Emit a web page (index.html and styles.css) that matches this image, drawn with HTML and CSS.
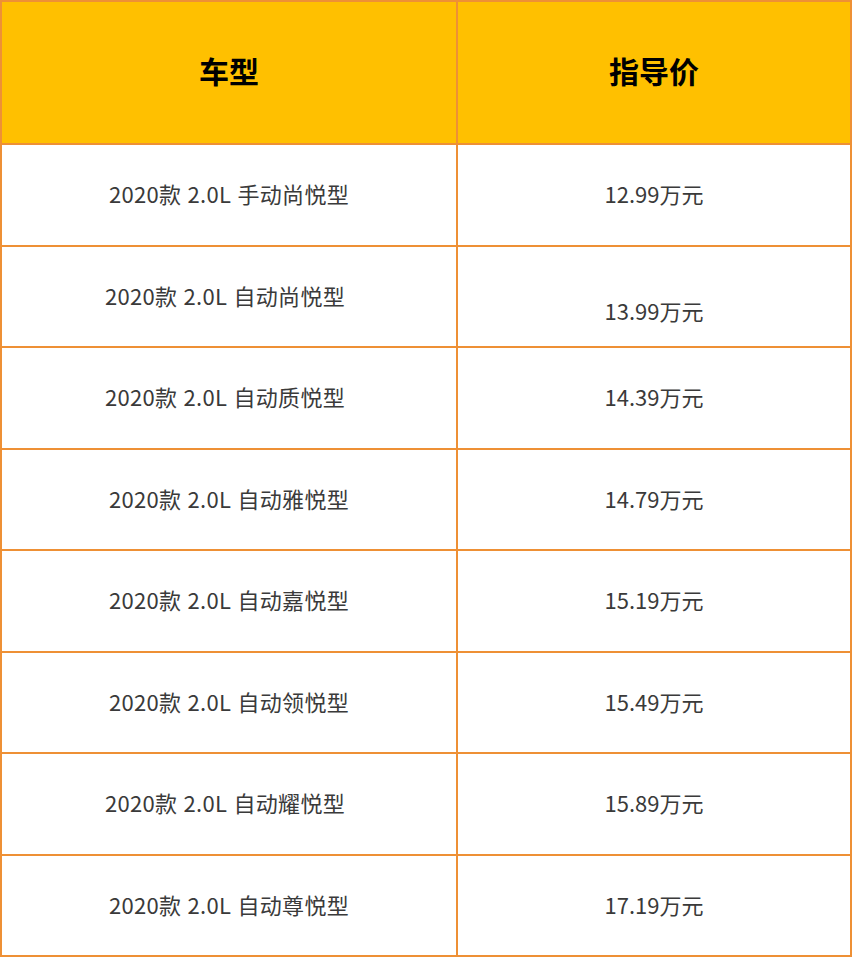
FILE: index.html
```html
<!DOCTYPE html>
<html lang="zh-CN">
<head>
<meta charset="utf-8">
<title>车型指导价</title>
<link rel="stylesheet" href="styles.css">
</head>
<body>
<div class="table">
  <div class="cell head">车型</div>
  <div class="cell head">指导价</div>

  <div class="cell model">2020款 2.0L 手动尚悦型</div>
  <div class="cell price">12.99万元</div>

  <div class="cell model shift">2020款 2.0L 自动尚悦型</div>
  <div class="cell price low">13.99万元</div>

  <div class="cell model shift">2020款 2.0L 自动质悦型</div>
  <div class="cell price">14.39万元</div>

  <div class="cell model">2020款 2.0L 自动雅悦型</div>
  <div class="cell price">14.79万元</div>

  <div class="cell model">2020款 2.0L 自动嘉悦型</div>
  <div class="cell price">15.19万元</div>

  <div class="cell model">2020款 2.0L 自动领悦型</div>
  <div class="cell price">15.49万元</div>

  <div class="cell model shift">2020款 2.0L 自动耀悦型</div>
  <div class="cell price">15.89万元</div>

  <div class="cell model">2020款 2.0L 自动尊悦型</div>
  <div class="cell price">17.19万元</div>
</div>
</body>
</html>
```
FILE: styles.css
```css
html, body {
  margin: 0;
  padding: 0;
  background: #ffffff;
}

body {
  font-family: "Noto Sans CJK SC", "Noto Sans", sans-serif;
}

.table {
  display: grid;
  grid-template-columns: 456px 394px;
  grid-template-rows: 143px repeat(8, 101.5px);
  width: 852px;
  box-sizing: border-box;
  border-top: 2px solid #ee9035;
  border-left: 2px solid #ee9035;
}

.cell {
  display: flex;
  align-items: center;
  justify-content: center;
  box-sizing: border-box;
  border-right: 2px solid #ee9035;
  border-bottom: 2px solid #ee9035;
  padding-bottom: 3px;
  font-size: 22px;
  color: #3a3a3a;
  background: #ffffff;
  white-space: pre;
}

.model {
  letter-spacing: 0.3px;
  word-spacing: 1px;
}

.head {
  background: #ffc000;
  color: #000000;
  font-size: 30px;
  font-weight: 700;
  padding-bottom: 6px;
}

.shift {
  padding-right: 8px;
}

.low {
  padding-top: 30px;
}
```
